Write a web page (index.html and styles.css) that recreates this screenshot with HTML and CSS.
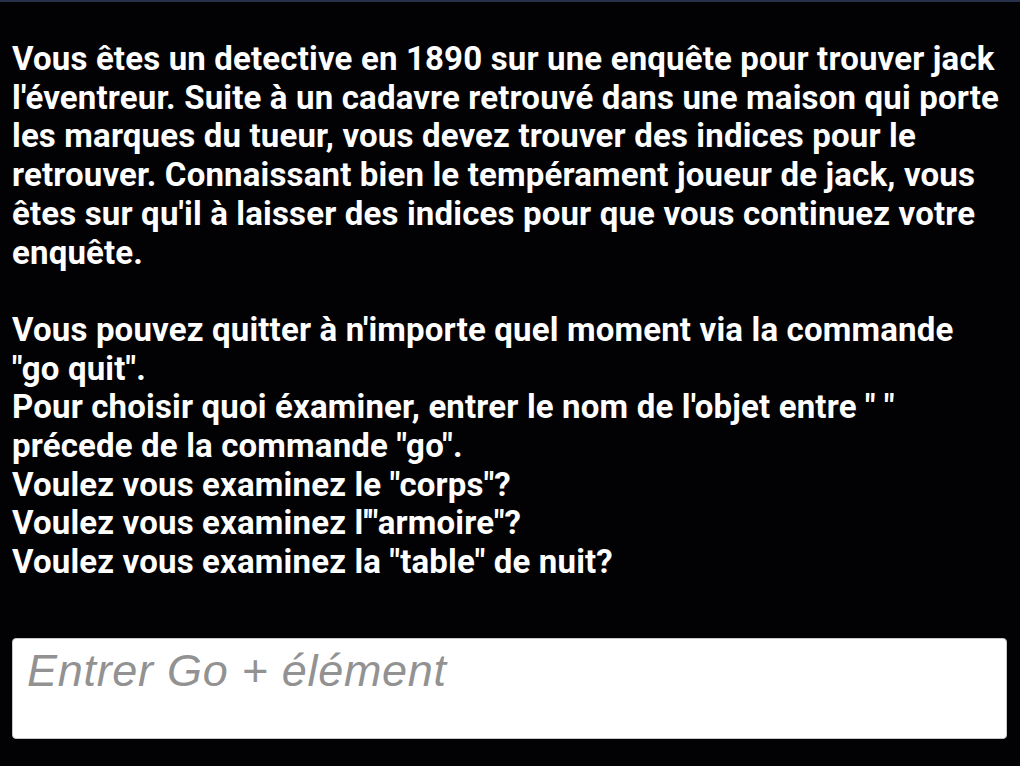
FILE: index.html
```html
<!DOCTYPE html>
<html lang="fr">
<head>
<meta charset="utf-8">
<title>Enquête</title>
<link rel="stylesheet" href="styles.css">
</head>
<body>
<main class="screen">
  <div class="story">
    <p>Vous êtes un detective en 1890 sur une enquête pour trouver jack l'éventreur. Suite à un cadavre retrouvé dans une maison qui porte les marques du tueur, vous devez trouver des indices pour le retrouver. Connaissant bien le tempérament joueur de jack, vous êtes sur qu'il à laisser des indices pour que vous continuez votre enquête.</p>
    <p>Vous pouvez quitter à n'importe quel moment via la commande "go quit".<br>Pour choisir quoi éxaminer, entrer le nom de l'objet entre " "<br>précede de la commande "go".<br>Voulez vous examinez le "corps"?<br>Voulez vous examinez l'"armoire"?<br>Voulez vous examinez la "table" de nuit?</p>
  </div>
  <textarea class="command" placeholder="Entrer Go + élément"></textarea>
</main>
</body>
</html>
```

FILE: styles.css
```css
html, body {
  margin: 0;
  padding: 0;
  height: 100%;
  background: #020205;
}
.screen {
  box-sizing: border-box;
  height: 766px;
  border-top: 2px solid #27314a;
  padding: 38px 13px 0 12px;
  display: flex;
  flex-direction: column;
}
.story {
  color: #ffffff;
  font-family: Roboto, "Liberation Sans", sans-serif;
  font-weight: 700;
  font-size: 33px;
  line-height: 38.7px;
  letter-spacing: 0.16px;
}
.story p {
  margin: 0 0 38.7px 0;
}
.story p:last-child {
  margin-bottom: 0;
}
.command {
  box-sizing: border-box;
  margin-top: 56px;
  width: 995px;
  height: 101px;
  background: #ffffff;
  border: 1px solid #c8c8c8;
  border-radius: 4px;
  padding: 6px 14px;
  resize: none;
  outline: none;
  font-family: "Liberation Sans", Arial, sans-serif;
  font-style: italic;
  font-size: 45px;
  letter-spacing: 0.7px;
  color: #333;
}
.command::placeholder {
  color: #929292;
}
```
